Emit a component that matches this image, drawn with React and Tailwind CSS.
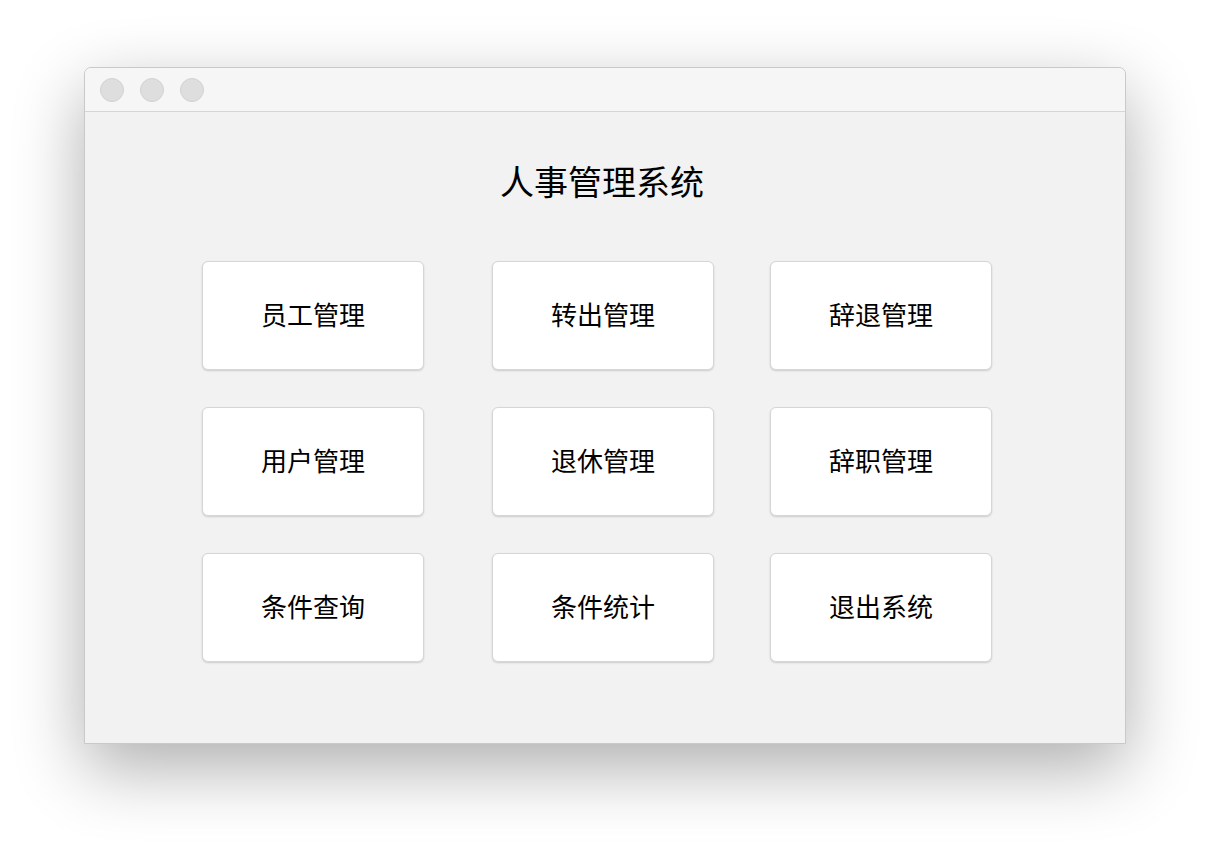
const items = [
  "员工管理",
  "转出管理",
  "辞退管理",
  "用户管理",
  "退休管理",
  "辞职管理",
  "条件查询",
  "条件统计",
  "退出系统",
];

function TrafficLight() {
  return <span className="h-[24px] w-[24px] rounded-full border border-[#d2d2d2] bg-[#dedede]" />;
}

export default function App() {
  return (
    <div
      className="flex h-[844px] w-[1210px] justify-center bg-white pt-[67px]"
      style={{ fontFamily: '"Noto Sans CJK SC", "Noto Sans", sans-serif' }}
    >
      <div className="flex h-[677px] w-[1042px] flex-col overflow-hidden rounded-t-[7px] border border-[#c9c9c9] bg-[#f2f2f2] shadow-[0_24px_70px_rgba(0,0,0,0.32)]">
        <div className="flex h-[44px] shrink-0 items-center gap-[16px] border-b border-[#d6d6d6] bg-[#f6f6f6] pl-[15px]">
          <TrafficLight />
          <TrafficLight />
          <TrafficLight />
        </div>

        <div className="flex flex-col">
          <h1 className="mt-[46px] pr-[6px] text-center text-[34px] leading-[46px] text-black">
            人事管理系统
          </h1>

          <div className="mt-[57px] grid grid-cols-[290px_278px_222px] gap-y-[37px] pl-[117px]">
            {items.map((label) => (
              <button
                key={label}
                className="flex h-[109px] w-[222px] items-center justify-center rounded-[6px] border border-[#d6d6d6] bg-white pb-[4px] text-[26px] text-black shadow-[0_1px_2px_rgba(0,0,0,0.16)]"
              >
                {label}
              </button>
            ))}
          </div>
        </div>
      </div>
    </div>
  );
}
